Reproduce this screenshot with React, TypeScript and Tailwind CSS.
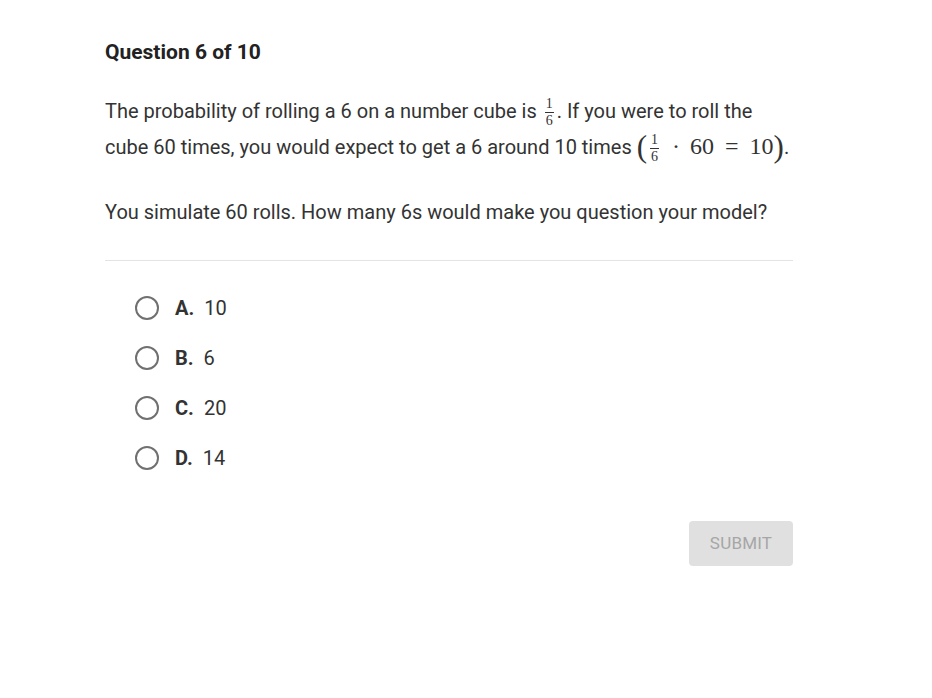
import { useState } from "react"

const options = [
  { key: "A", value: "10" },
  { key: "B", value: "6" },
  { key: "C", value: "20" },
  { key: "D", value: "14" },
]

function Frac() {
  return (
    <span className="inline-flex flex-col items-center align-middle mx-[3px] leading-[12px] text-[14px] font-['Liberation_Serif',serif]">
      <span className="px-[1px]">1</span>
      <span className="w-full border-t border-[#333] my-[2px]" />
      <span className="px-[1px]">6</span>
    </span>
  )
}

export default function App() {
  const [selected, setSelected] = useState<string | null>(null)

  return (
    <div className="min-h-screen bg-white font-['Roboto',sans-serif] text-[#333]">
      <div className="w-[688px] ml-[105px] pt-[38px]">
        <h1 className="text-[21px] font-bold leading-[28px] text-[#222]">Question 6 of 10</h1>

        <p className="mt-[28px] text-[20px] leading-[35px] whitespace-nowrap">
          The probability of rolling a 6 on a number cube is <Frac />. If you were to roll the
          <br />
          cube 60 times, you would expect to get a 6 around 10 times{" "}
          <span className="font-['Liberation_Serif',serif] text-[24px]">
            <span className="text-[31px] align-[-3px]">(</span>
            <Frac />
            <span className="mx-[10px]">·</span>
            60<span className="mx-[11px]">=</span>10
            <span className="text-[31px] align-[-3px]">)</span>
          </span>
          .
        </p>

        <p className="mt-[30px] text-[20px] leading-[35px]">
          You simulate 60 rolls. How many 6s would make you question your model?
        </p>

        <div className="mt-[30px] border-t border-[#e3e3e3]" />

        <div className="mt-[22px] pl-[30px] flex flex-col">
          {options.map((o) => (
            <label key={o.key} className="h-[50px] flex items-center cursor-pointer" onClick={() => setSelected(o.key)}>
              <span className="w-[24px] h-[24px] rounded-full border-2 border-[#707070] flex items-center justify-center">
                {selected === o.key && <span className="w-[12px] h-[12px] rounded-full bg-[#707070]" />}
              </span>
              <span className="ml-[16px] text-[20px] font-bold text-[#333]">{o.key}.</span>
              <span className="ml-[10px] text-[20px] text-[#333]">{o.value}</span>
            </label>
          ))}
        </div>

        <div className="mt-[38px] flex justify-end">
          <button className="w-[104px] h-[45px] rounded-[4px] bg-[#e0e0e0] text-[#a6a6a6] text-[17px] tracking-[0.2px]">
            SUBMIT
          </button>
        </div>
      </div>
    </div>
  )
}
